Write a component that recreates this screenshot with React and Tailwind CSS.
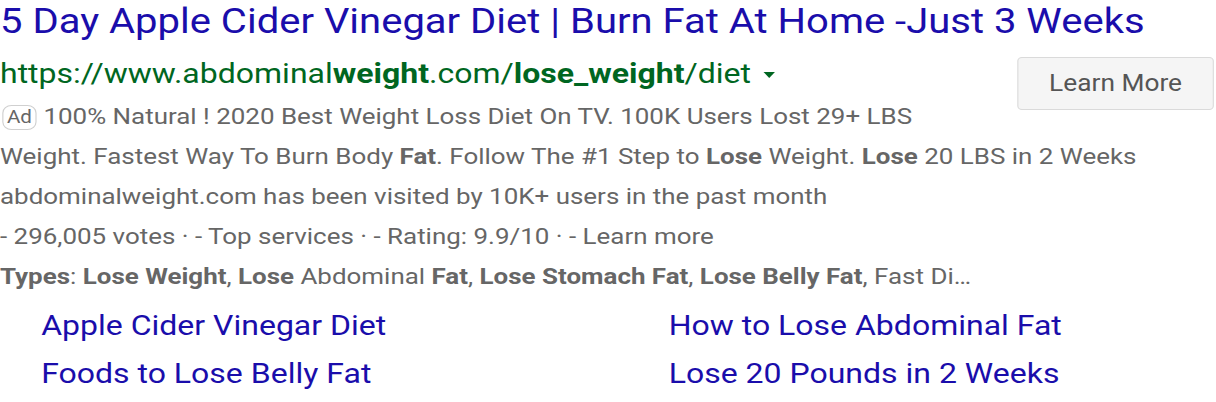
export default function App() {
  const f = { fontFamily: "Roboto, 'Noto Sans', sans-serif" };
  return (
    <div className="w-[1216px] h-[402px] bg-white overflow-hidden" style={f}>
      <div className="w-[1064px] origin-top-left scale-x-[1.143]">
        <div className="text-[35px] leading-[44px] text-[#1a0dab] whitespace-nowrap">
          5 Day Apple Cider Vinegar Diet | Burn Fat At Home -Just 3 Weeks
        </div>
        <div className="flex items-start justify-between">
          <div className="flex items-center h-[60px] text-[28px] text-[#006621] whitespace-nowrap">
            <span>
              https://www.abdominal<b>weight</b>.com/<b>lose_weight</b>/diet
            </span>
            <span className="ml-[11px] mt-[2px] w-0 h-0 border-l-[5px] border-r-[5px] border-t-[6px] border-l-transparent border-r-transparent border-t-[#006621]"></span>
          </div>
          <button className="mt-[13px] mr-[2px] w-[172px] h-[53px] pt-[2px] rounded-[4px] border border-[#dadada] bg-[#f5f5f5] text-[23px] text-[#555] flex items-center justify-center">
            Learn More
          </button>
        </div>
        <div className="-mt-[13px] text-[22.7px] leading-[40px] text-[#666] whitespace-nowrap">
          <div className="flex items-center">
            <span className="ml-[2px] mr-[6px] inline-flex items-center justify-center h-[25px] w-[30px] rounded-[8px] border border-[#d0d0d0] text-[18px] leading-none text-[#666]">Ad</span>
            <span>100% Natural ! 2020 Best Weight Loss Diet On TV. 100K Users Lost 29+ LBS</span>
          </div>
          <div>
            Weight. Fastest Way To Burn Body <b>Fat</b>. Follow The #1 Step to <b>Lose</b> Weight. <b>Lose</b> 20 LBS in 2 Weeks
          </div>
          <div>abdominalweight.com has been visited by 10K+ users in the past month</div>
          <div>- 296,005 votes · - Top services · - Rating: 9.9/10 · - Learn more</div>
          <div>
            <b>Types</b>: <b>Lose Weight</b>, <b>Lose</b> Abdominal <b>Fat</b>, <b>Lose Stomach Fat</b>, <b>Lose Belly Fat</b>, Fast Di…
          </div>
        </div>
        <div className="mt-[5px] grid grid-cols-[549px_1fr] pl-[36px] text-[28px] leading-[48px] text-[#1a0dab] whitespace-nowrap">
          <div>Apple Cider Vinegar Diet</div>
          <div>How to Lose Abdominal Fat</div>
          <div>Foods to Lose Belly Fat</div>
          <div>Lose 20 Pounds in 2 Weeks</div>
        </div>
      </div>
    </div>
  );
}
